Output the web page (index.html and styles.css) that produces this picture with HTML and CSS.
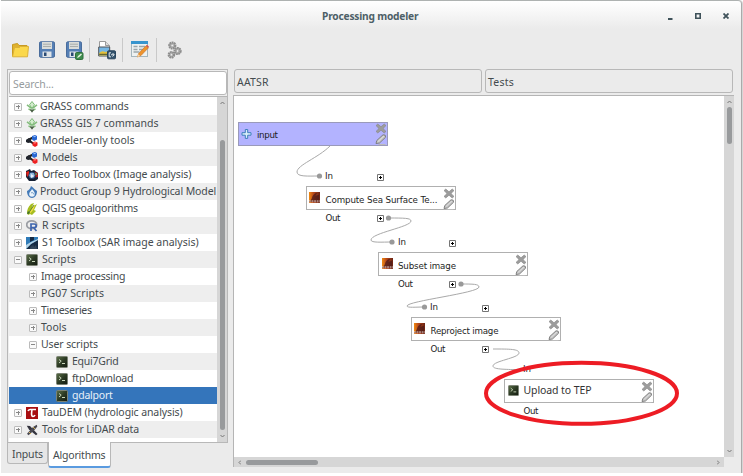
FILE: index.html
```html
<!DOCTYPE html>
<html lang="en">
<head>
<meta charset="utf-8">
<title>Processing modeler</title>
<link rel="stylesheet" href="styles.css">
</head>
<body>
<svg class="defs" width="0" height="0">
  <defs>
    <linearGradient id="termfill" x1="0" y1="0" x2="1" y2="1"><stop offset="0" stop-color="#5c7149"/><stop offset=".5" stop-color="#2c3a24"/><stop offset="1" stop-color="#131a10"/></linearGradient>
    <linearGradient id="beamfill" x1="0" y1="0" x2="1" y2="0"><stop offset="0" stop-color="#f08a10"/><stop offset=".4" stop-color="#b8481a"/><stop offset="1" stop-color="#6b2414"/></linearGradient>
    <symbol id="grass" viewBox="0 0 12 12"><path d="M1 3.800l4.500 3.700M11 3.800L6.500 7.500M2.500 7.800L6 9.800l3.500-2" fill="none" stroke="#83bd7b" stroke-width="1.500"/><path d="M6 .5l2.500 3.200L6 7.500 3.500 3.700z" fill="#d3edcd" stroke="#62a95c" stroke-width=".8"/><path d="M3.800 8.500h4.400L6 11.700z" fill="#4b5b48"/></symbol>
    <symbol id="model" viewBox="0 0 12 12"><path d="M1 5.500l6-3M4 6l5 4" stroke="#222" stroke-width="2"/><path d="M0 5l3-2 2 2v2.500L2 8 0 7z" fill="#20242c"/><path d="M6 1l3-1 2 1v3.500L8 6 6 4.500z" fill="#2866d2"/><path d="M6.500 7.500L9 6.500l2.500 1v3L9 12l-2.500-1.500z" fill="#ef2021"/><path d="M7 1.500l2-.6 1.200.6-1.800.7z" fill="#a9ccff"/><path d="M7.200 8L9 7.200l1.500.6L9 8.500z" fill="#ffb1a8"/></symbol>
    <symbol id="orfeo" viewBox="0 0 12 12"><path d="M0 2l4-2 1 2 3-1 4 3v6l-3 2H3L0 8z" fill="#152033"/><path d="M0 3l3-1v4L1 8z" fill="#e0221b"/><circle cx="6" cy="6.300" r="3.200" fill="#91b7dc" stroke="#1f3c69"/><path d="M5 5l3 2-3 2z" fill="#e7f0f8"/><path d="M9 2.500L12 4v4l-2.300.5z" fill="#a81b1e"/><path d="M9.500 4h1.200v2H9.500z" fill="#54b45d"/></symbol>
    <symbol id="hydro" viewBox="0 0 12 12"><path d="M1 5c2-1 3-2 4-5 3 2 4 4 6 5 0 4-2 7-5 7S1 9 1 5z" fill="#447ab8"/><path d="M6 3c2 2.500 2.800 3.300 2.800 5a2.800 2.800 0 0 1-5.600 0C3.200 6.300 5 5 6 3z" fill="#e9f3fb"/><path d="M5 7c1-1 3 0 3 1.500" fill="none" stroke="#5787ba" stroke-width=".8"/></symbol>
    <symbol id="qgis" viewBox="0 0 12 12"><path d="M1 10c0-3 1-6 4-9l3-1-2 4 5-3-3 6 2 1-4 4-2-1-2 1z" fill="#a6bd22"/><path d="M3.500 9C5 7 6 4 9 1.500 8.500 5 7 8 4 10.500z" fill="#f0de44"/><path d="M2 11L8 2" stroke="#43722c" stroke-width=".8"/><path d="M2 8l-1 3 3-1z" fill="#40702b"/></symbol>
    <symbol id="rlogo" viewBox="0 0 12 12"><ellipse cx="5.700" cy="4.800" rx="5" ry="3.900" fill="none" stroke="#9a9da3" stroke-width="1.800"/><path d="M5 11V4h3c3 0 3 3.500 0 3.500H5M7.500 7.500L10.500 11" fill="none" stroke="#3e65ae" stroke-width="1.700"/></symbol>
    <symbol id="sone" viewBox="0 0 12 12"><path d="M0 0h12v12H0z" fill="#152a43"/><path d="M0 0h4v5l4-2V0h4v3L5 7 0 12z" fill="#2f7bb8"/><path d="M0 8l5-3 7-3v1L5 7l-5 5z" fill="#b3d3e6"/><path d="M4 12l1-4 1 2 1-3 1 3 2-2 1 4z" fill="#33465a"/></symbol>
    <symbol id="term" viewBox="0 0 12 12"><rect x=".5" y=".5" width="11" height="11" rx="1" fill="url(#termfill)" stroke="#7b8274"/><path d="M3 3.500l2.200 1.700L3 7M6 7.500h3" fill="none" stroke="#c9d6ba" stroke-width="1"/></symbol>
    <symbol id="tau" viewBox="0 0 12 12"><path d="M0 0h12v12H0z" fill="#a80f12"/><path d="M2 4c1-2 2-1.500 3-1.500h5M6 2.500C5.500 6 5 9.500 7 9.500c1.200 0 1.500-.5 2-1.500" fill="none" stroke="#fff" stroke-width="1.600"/></symbol>
    <symbol id="lidar" viewBox="0 0 12 12"><path d="M.8 1.800l3.200.2L11.500 10 10 11.200 3 5.500z" fill="#34343e"/><path d="M10.800.8L7 3 1 9.800l1.500 1.500L8.500 6l2.800-3.500z" fill="#4a4951"/><path d="M3 8l2 2M7 3l2 2" stroke="#d1ae57" stroke-width="1"/></symbol>
    <symbol id="beam" viewBox="0 0 12 12"><path d="M0 0h12v12H0z" fill="url(#beamfill)"/><path d="M3 7c1-4 3-6 6-6l-2 3 4-1v7H1z" fill="#4a1a18" opacity=".75"/><path d="M0 10.200h12" stroke="#e3d2ca" stroke-width="1.800" stroke-dasharray="2 .8"/><path d="M0 10.500h12" stroke="#511" stroke-width=".5"/></symbol>
    <symbol id="tools" viewBox="0 0 12 24"><path d="M2.800 1L6 3.800 9.200 1 11 2.600 8 5.500l3 2.900-1.800 1.600L6 7.200 2.800 10 1 8.400l3-2.900-3-2.900z" fill="#9c9c9c" stroke="#858585" stroke-width=".6"/><path d="M3.500 21.500h7" stroke="#bbb" stroke-width="1"/><path d="M1 20.500L1.800 17.500 8 11.800q3-.5 2.600 2.400L4.500 20z" fill="#c4c4c4" stroke="#777" stroke-width=".9"/><path d="M2.800 18.600L9 13" stroke="#e4e4e4" stroke-width=".8"/></symbol>
    <symbol id="plus" viewBox="0 0 7 7"><path d="M.5.5h6v6h-6z" fill="#fff" stroke="#757575"/><path d="M3.500 2v3M2 3.500h3" stroke="#000"/></symbol>
    <symbol id="floppy" viewBox="0 0 16 17"><rect x=".5" y=".8" width="15" height="15.500" rx="1.300" fill="#557fb5" stroke="#4a6d9c"/><path d="M3 1h10v7H3z" fill="#d9dcda"/><path d="M4 3.200h8M4 5.500h8" stroke="#a8adab"/><path d="M3.500 10.500h9V16h-9z" fill="#dfe4e8"/><path d="M5 11.500h2.500V15H5z" fill="#294a74"/></symbol>
  </defs>
</svg>
<div class="window">
  <header class="titlebar">
    <span class="side"></span>
    <h1>Processing modeler</h1>
    <span class="side controls">
      <svg width="5" height="8"><path d="M0 7h4.500" stroke="#3f525a" stroke-width="2"/></svg>
      <svg width="6" height="6"><path d="M.8.800h4.400v4.400H.8z" fill="none" stroke="#3f525a" stroke-width="1.600"/></svg>
      <svg width="6" height="6"><path d="M.5.500l5 5M5.500.500l-5 5" stroke="#3f525a" stroke-width="1.800"/></svg>
    </span>
  </header>
  <div class="toolbar">
    <svg class="t-open" width="17" height="15" viewBox="0 0 17 15"><path d="M.5 13V1.500L5.500.500 7 2.500h8V5" fill="#e0b22e" stroke="#c79a22"/><path d="M.5 13.800L2.500 4.500h5l1-1h8l-1 10.300z" fill="#fbd84b" stroke="#dcb137"/></svg>
    <svg class="t-save" width="16" height="17"><use href="#floppy"/></svg>
    <svg class="t-saveas" width="18" height="19" viewBox="0 0 18 19"><use href="#floppy" width="16" height="17"/><rect x="9.500" y="11.500" width="7.500" height="7" rx="1.200" fill="#3f8d4e" stroke="#2f6e3c"/><path d="M11 17l1-2 3-2.500 1 1-3 2.700z" fill="#e6f2df"/></svg>
    <i></i>
    <svg class="t-export" width="18" height="19" viewBox="0 0 18 19"><path d="M1.500.500h6l4 4V10h-10z" fill="#fff" stroke="#999"/><path d="M7.500.500v4h4" fill="#ddd" stroke="#999"/><path d="M.7 6h11v9H.7z" fill="#76b7e4" stroke="#50545a"/><path d="M1.200 12q3-3 6-1l4-1v4.500h-10z" fill="#e5c13b"/><path d="M1.200 13.300h10" stroke="#46502d"/><rect x="9.500" y="9.800" width="8" height="8" rx="1" fill="#34536d" stroke="#29445c"/><path d="M13 11.800h-1.800v4H13M13 13.800h3M14.500 12l1.800 1.800-1.800 1.800" fill="none" stroke="#e0e7ec"/></svg>
    <i></i>
    <svg class="t-edit" width="18" height="17" viewBox="0 0 18 17"><rect x=".5" y=".5" width="16" height="15" fill="#edf1f1" stroke="#a5b6bd"/><path d="M0 0h17v3H0z" fill="#3795ce"/><path d="M2.500 5.500h4M2.500 8.500h4M8 5.500h6M8 8.500h4M2.500 11h6" stroke="#9ba6aa" stroke-width="1.300"/><path d="M6.500 16l1.200-3.500L15 4.800l2.400 2L10 14.500z" fill="#ee942d" stroke="#c9752c" stroke-width=".7"/><path d="M15 4.800l1-1 2 2-.8 1z" fill="#cf4f4c"/><path d="M6.300 16.200l1-3 2 1.700z" fill="#f5d7ab"/></svg>
    <i></i>
    <svg class="t-run" width="15" height="18" viewBox="0 0 15 18"><g fill="#b8b8b6" stroke="#8d8d8d" stroke-width="2.200"><circle cx="5.300" cy="4.500" r="3" stroke-dasharray="1.700 .5"/><circle cx="10.600" cy="10" r="3" stroke-dasharray="1.700 .5"/><circle cx="4.400" cy="13.800" r="2.700" stroke-dasharray="1.700 .5"/></g><g fill="#eee" stroke="#999" stroke-width=".6"><circle cx="5.300" cy="4.500" r="1.300"/><circle cx="10.600" cy="10" r="1.300"/><circle cx="4.400" cy="13.800" r="1.200"/></g></svg>
  </div>
  <div class="main">
    <aside>
      <div class="panel">
        <div class="search">Search...</div>
        <div class="treebox">
          <ul class="tree">
            <li><b class="ex"></b><svg><use href="#grass"/></svg><span>GRASS commands</span></li>
            <li class="even"><b class="ex"></b><svg><use href="#grass"/></svg><span>GRASS GIS 7 commands</span></li>
            <li class="wide even"><b class="ex"></b><svg><use href="#model"/></svg><span>Modeler-only tools</span></li>
            <li class="wide"><b class="ex"></b><svg><use href="#model"/></svg><span>Models</span></li>
            <li class="wide"><b class="ex"></b><svg><use href="#orfeo"/></svg><span>Orfeo Toolbox (Image analysis)</span></li>
            <li><b class="ex"></b><svg><use href="#hydro"/></svg><span>Product Group 9 Hydrological Model</span></li>
            <li class="wide snug"><b class="ex"></b><svg><use href="#qgis"/></svg><span>QGIS geoalgorithms</span></li>
            <li class="wide loose"><b class="ex"></b><svg><use href="#rlogo"/></svg><span>R scripts</span></li>
            <li class="wide even"><b class="ex"></b><svg><use href="#sone"/></svg><span>S1 Toolbox (SAR image analysis)</span></li>
            <li class="wide loose"><b class="ex open"></b><svg><use href="#term"/></svg><span>Scripts</span></li>
            <li class="sub snug"><b class="ex"></b><span>Image processing</span></li>
            <li class="sub loose"><b class="ex"></b><span>PG07 Scripts</span></li>
            <li class="sub snug"><b class="ex"></b><span>Timeseries</span></li>
            <li class="sub even"><b class="ex"></b><span>Tools</span></li>
            <li class="sub"><b class="ex open"></b><span>User scripts</span></li>
            <li class="leaf snug"><svg><use href="#term"/></svg><span>Equi7Grid</span></li>
            <li class="leaf snug"><svg><use href="#term"/></svg><span>ftpDownload</span></li>
            <li class="leaf snug selected"><svg><use href="#term"/></svg><span>gdalport</span></li>
            <li class="wide"><b class="ex"></b><svg><use href="#tau"/></svg><span>TauDEM (hydrologic analysis)</span></li>
            <li class="wide"><b class="ex"></b><svg><use href="#lidar"/></svg><span>Tools for LiDAR data</span></li>
          </ul>
          <div class="vbar tree-bar"><svg width="5" height="3"><path d="M.5 3l2-2 2 2" class="arrow"/></svg><div class="thumb"></div><svg width="5" height="3"><path d="M.5 0l2 2 2-2" class="arrow"/></svg></div>
        </div>
      </div>
      <nav class="tabs"><span class="tab">Inputs</span><span class="tab active">Algorithms</span></nav>
    </aside>
    <section>
      <div class="fields"><div>AATSR</div><div>Tests</div></div>
      <div class="canvas">
        <svg class="diagram" width="490" height="361" viewBox="234 96 490 361">
          <g class="link">
            <path d="M330 146C318 158 297 165 297 172C297 177 308 176 319 176"/>
            <path d="M389 218C404 218 411 218 411 221C411 227 371 233 371 240C371 243 382 242 392 242"/>
            <path d="M461 284C473 284 479 284 479 287C479 293 407 301 407 306C407 308 416 307 424 307"/>
            <path d="M493 349C510 349 519 349 519 353C519 358 493 361 493 366C493 370 508 369 520 370"/>
          </g>
          <g class="dot"><circle cx="319.500" cy="176" r="2.600"/><circle cx="388.500" cy="218" r="2.600"/><circle cx="392" cy="242" r="2.600"/><circle cx="461" cy="284" r="2.600"/><circle cx="424.500" cy="307" r="2.600"/></g>
          <g class="node">
            <rect class="input" x="238.500" y="122.500" width="149" height="23"/>
            <rect x="306.500" y="186.500" width="149" height="23"/>
            <rect x="378.500" y="252.500" width="149" height="23"/>
            <rect x="411.500" y="317.500" width="149" height="23"/>
            <rect x="504.500" y="379.500" width="149" height="23"/>
          </g>
          <path d="M245.300 129.500h2.400v3.200h3.300v2.500h-3.300v3.200h-2.400v-3.200H242v-2.500h3.300z" fill="#d9eef9" stroke="#3c7ebc"/>
          <use href="#tools" x="375" y="123" width="12" height="24"/>
          <use href="#tools" x="443" y="188" width="12" height="24"/>
          <use href="#tools" x="515" y="254" width="12" height="24"/>
          <use href="#tools" x="548" y="319" width="12" height="24"/>
          <use href="#tools" x="641" y="381" width="12" height="24"/>
          <use href="#beam" x="309" y="192" width="11" height="11"/>
          <use href="#beam" x="382" y="258" width="11" height="11"/>
          <use href="#beam" x="414" y="323" width="11" height="11"/>
          <use href="#term" x="508" y="385" width="11" height="11"/>
          <use href="#plus" x="377" y="174" width="7" height="7"/>
          <use href="#plus" x="377" y="215" width="7" height="7"/>
          <use href="#plus" x="449" y="240" width="7" height="7"/>
          <use href="#plus" x="449" y="281" width="7" height="7"/>
          <use href="#plus" x="482" y="305" width="7" height="7"/>
          <use href="#plus" x="482" y="346" width="7" height="7"/>
          <g class="label">
            <text x="257" y="138" textLength="21">input</text>
            <text x="325" y="179" textLength="8">In</text>
            <text x="325.500" y="203" textLength="112">Compute Sea Surface Te...</text>
            <text x="325.500" y="221" textLength="15">Out</text>
            <text x="398" y="245" textLength="8">In</text>
            <text x="398" y="269" textLength="58">Subset image</text>
            <text x="398" y="287" textLength="15">Out</text>
            <text x="430" y="310" textLength="8">In</text>
            <text x="430.500" y="334" textLength="68">Reproject image</text>
            <text x="430.500" y="352" textLength="15">Out</text>
            <text x="523" y="372" textLength="8">In</text>
            <text class="upload" x="523.500" y="394" textLength="68">Upload to TEP</text>
            <text x="523.500" y="414" textLength="15">Out</text>
          </g>
          <ellipse class="mark" cx="581.500" cy="393.300" rx="95.500" ry="30.500"/>
        </svg>
        <div class="vbar canvas-bar"><svg width="5" height="3"><path d="M.5 3l2-2 2 2" class="arrow"/></svg><div class="thumb"></div><svg width="5" height="3"><path d="M.5 0l2 2 2-2" class="arrow"/></svg></div>
        <div class="hbar"><svg width="3" height="5"><path d="M3 .5l-2 2 2 2" class="arrow"/></svg><div class="thumb"></div><svg width="3" height="5"><path d="M0 .5l2 2-2 2" class="arrow"/></svg></div>
      </div>
    </section>
  </div>
</div>
</body>
</html>
```
FILE: styles.css
```css
* { box-sizing: border-box; }
body { margin: 0; width: 743px; height: 476px; overflow: hidden; background: #fff; color: #444b4e; font: 10.5px/17px "Noto Sans", sans-serif; }
.defs { position: absolute; }
svg { display: block; flex: none; }
.window { width: 741px; height: 473px; margin-left: 1px; padding-top: 1px; background: linear-gradient(#fff, #ebebeb 28px) 0 0 / 100% 100%; border-right: 1px solid #aaa; border-radius: 0 4px 0 0; border-top: 1px solid #aeb2b1; box-shadow: 1px 0 0 #d6d6d6; }
.titlebar { display: flex; align-items: center; height: 28px; }
.titlebar h1 { margin: 0; padding-left: 0; font: bold 10.2px/28px "Noto Sans", sans-serif; letter-spacing: -.2px; color: #4d6067; }
.side { width: 322px; flex: none; }
.titlebar h1 { width: 98px; flex: none; white-space: nowrap; }
.side.controls { flex: 1; width: auto; }
.titlebar .side:first-child { width: 321px; }
.controls { display: flex; justify-content: flex-end; align-items: center; gap: 22px; padding-right: 12px; }
.toolbar { display: flex; align-items: flex-start; height: 39px; padding: 11px 0 0 11px; }
.toolbar i { width: 1px; height: 24px; margin-top: -3px; background: #c9c9c9; flex: none; }
.t-open { margin-top: 2px; }
.t-save { margin-left: 10px; }
.t-saveas { margin: 0 5px 0 11px; }
.t-export { margin: 0 6px 0 8px; }
.t-edit { margin: 0 7px 0 8px; }
.t-run { margin-left: 10px; }
.main { display: flex; gap: 5px; padding-left: 6px; }
aside { width: 221px; }
.panel { height: 374px; border: 1px solid #b8b8b8; padding: 1px 0 0 1px; background: #eee; }
.search { width: 218px; height: 24px; padding-left: 3px; border: 1px solid #b8b8b8; border-radius: 3px; background: #fff; color: #969b9d; line-height: 24px; letter-spacing: -.1px; }
.treebox { display: flex; height: 346px; margin-top: 1px; border-top: 1px solid #b5b5b5; background: #fff; }
.tree { list-style: none; margin: 0; padding: 1px 0 0; width: 208px; }
.tree li { display: flex; align-items: center; height: 17px; padding-left: 5px; white-space: nowrap; letter-spacing: -.1px; }
.tree li.even { letter-spacing: 0; }
.tree li.snug { letter-spacing: -.24px; }
.tree li.loose { letter-spacing: .1px; }
.tree li:nth-child(even) { background: #eeeeee; }
.tree li svg { width: 12px; height: 12px; margin-left: 4px; }
.tree li span { margin-left: 2px; }
.tree li.wide span { margin-left: 4px; }
.tree li.sub { padding-left: 20px; }
.tree li.sub span { margin-left: 4px; }
.tree li.leaf { padding-left: 43px; }
.tree li.leaf span { margin-left: 4px; }
.tree li.selected { background: #3475bb; color: #e8f0f8; }
.ex { flex: none; width: 8px; height: 8px; border: 1px solid #bbb; border-radius: 1px; background: linear-gradient(#888, #888) 50% 50% / 4px 1px no-repeat, linear-gradient(#888, #888) 50% 50% / 1px 4px no-repeat, #fafafa; }
.ex.open { background: linear-gradient(#888, #888) 50% 50% / 4px 1px no-repeat, #fafafa; }
.arrow { fill: none; stroke: #777; }
.vbar { display: flex; flex-direction: column; align-items: center; background: #d6d6d6; }
.thumb { background: #989a9c; border-radius: 3px; }
.tree-bar { width: 10px; padding: 4px 0; justify-content: space-between; }
.tree-bar .thumb { width: 5px; height: 290px; margin-top: 30px; }
.tabs { display: flex; align-items: flex-start; }
.tab { width: 41px; height: 21px; padding-left: 4px; border: 1px solid #b8b8b8; border-top: 0; border-radius: 0 0 3px 3px; line-height: 23px; background: #e6e6e6; letter-spacing: -.15px; }
.tab.active { width: 63px; height: 26px; margin-top: -1px; background: #fff; border-bottom: 2px solid #5a9be0; line-height: 26px; letter-spacing: -.2px; }
section { width: 501px; }
.fields { display: flex; gap: 3px; padding-left: 1px; height: 26px; }
.fields div { width: 248px; height: 24px; padding-left: 2px; border: 1px solid #b8b8b8; border-radius: 3px; line-height: 24px; letter-spacing: .2px; }
.canvas { display: grid; grid-template: 361px 10px / 490px 10px; width: 501px; height: 372px; border: 1px solid #b5b5b5; border-width: 1px 0 0 1px; background: #fff; }
.canvas-bar { padding: 4px 0; }
.canvas-bar .thumb { width: 5px; height: 37px; margin: 4px 0 auto; }
.hbar { display: flex; align-items: center; background: #d6d6d6; padding: 0 4px; }
.hbar .thumb { width: 72px; height: 5px; margin: 0 auto 0 5px; }
.canvas::after { content: ""; background: #ebebeb; }
.link { fill: none; stroke: #a9a9a9; stroke-width: 1; }
.dot { fill: #999; }
.node rect { fill: #fff; stroke: #b0b0b0; }
.node .input { fill: #b3b3ff; stroke: #9a9aba; }
.label { font: 8.7px "DejaVu Sans", sans-serif; fill: #1d1d1d; }
.label .upload { font: 10.5px "Noto Sans", sans-serif; fill: #333; }
.mark { fill: none; stroke: #ed1c24; stroke-width: 4; }
```
